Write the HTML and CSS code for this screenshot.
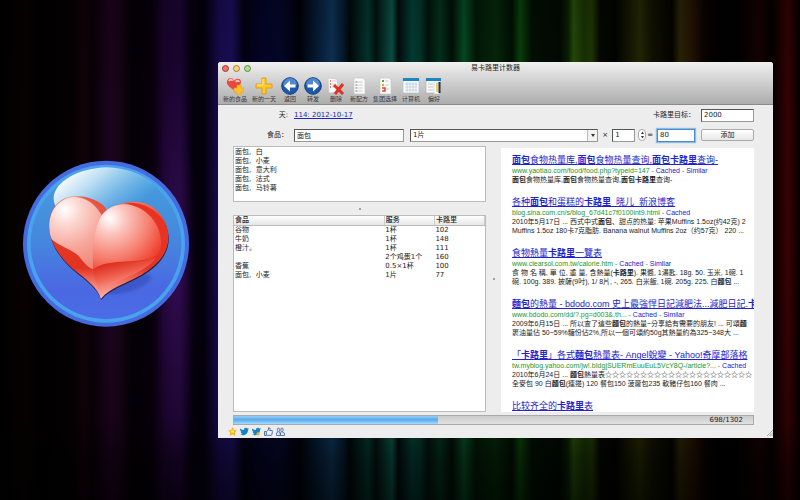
FILE: index.html
```html
<!DOCTYPE html>
<html lang="zh-CN">
<head>
<meta charset="utf-8">
<title>易卡路里计数器</title>
<link rel="stylesheet" href="styles.css">
</head>
<body>
<svg class="logo" viewBox="36 30 504 504" aria-hidden="true">
  <defs>
    <linearGradient id="disc" x1="0" y1="0" x2="0" y2="1"><stop offset="0" stop-color="#43a0dc"/><stop offset=".5" stop-color="#4685de"/><stop offset=".8" stop-color="#4a68e2"/><stop offset="1" stop-color="#4a6ce6"/></linearGradient>
    <linearGradient id="gloss" x1=".05" y1=".2" x2=".75" y2=".65"><stop offset="0" stop-color="#fff"/><stop offset=".35" stop-color="#b8dcf2"/><stop offset="1" stop-color="#8cc8ee" stop-opacity="0"/></linearGradient>
    <radialGradient id="left" gradientUnits="userSpaceOnUse" cx="165" cy="180" r="190"><stop offset="0" stop-color="#fff"/><stop offset=".25" stop-color="#fbd5cf"/><stop offset=".6" stop-color="#f7a79c"/><stop offset="1" stop-color="#f08374"/></radialGradient>
    <radialGradient id="right" gradientUnits="userSpaceOnUse" cx="300" cy="205" r="185"><stop offset="0" stop-color="#fff"/><stop offset=".25" stop-color="#fbc6bf"/><stop offset=".65" stop-color="#f67d6d"/><stop offset="1" stop-color="#ee3424"/></radialGradient>
    <linearGradient id="base" x1="0" y1="0" x2="0" y2="1"><stop offset="0" stop-color="#f0826f"/><stop offset=".3" stop-color="#e83a28"/><stop offset=".7" stop-color="#e23222"/><stop offset=".85" stop-color="#f47a6a"/><stop offset="1" stop-color="#fcb8ae"/></linearGradient>
    <linearGradient id="facet" gradientUnits="userSpaceOnUse" x1="250" y1="340" x2="275" y2="440"><stop offset="0" stop-color="#d51f12"/><stop offset=".5" stop-color="#f0604e"/><stop offset="1" stop-color="#fbb0a6"/></linearGradient>
    <filter id="soft" x="-20%" y="-20%" width="140%" height="140%"><feGaussianBlur stdDeviation="5"/></filter>
  </defs>
  <circle cx="288" cy="281" r="249" fill="#466ae0"/>
  <circle cx="288" cy="281" r="237" fill="#49a2ec"/>
  <circle cx="288" cy="281" r="226" fill="url(#disc)"/>
  <path d="M288 52C210 55 133 92 131 145C131 195 200 235 290 225C380 215 460 170 468 140C430 90 370 53 288 52Z" fill="url(#gloss)"/>
  <ellipse cx="355" cy="402" rx="72" ry="22" transform="rotate(-18 355 402)" fill="#304bb8" opacity=".6" filter="url(#soft)"/>
  <path d="M275 195C255 150 215 133 180 140C135 150 115 190 118 235C122 290 160 335 205 370C235 393 262 415 273 446C300 412 350 400 395 374C448 342 478 305 475 255C470 200 430 155 375 155C330 155 290 175 275 195Z" fill="#22204c" transform="translate(1 4)"/>
  <path d="M275 195C255 150 215 133 180 140C135 150 115 190 118 235C122 290 160 335 205 370C235 393 262 415 273 446C300 412 350 400 395 374C448 342 478 305 475 255C470 200 430 155 375 155C330 155 290 175 275 195Z" fill="url(#base)"/>
  <path d="M250 357C300 325 380 348 438 320C430 352 340 385 305 405C288 416 278 430 273 446C268 415 250 390 250 357Z" fill="url(#facet)"/>
  <path d="M275 195C258 167 235 145 195 140C145 142 115 185 118 235C119 250 121 260 125 268C150 290 190 300 208 320C225 342 238 356 250 357C252 300 250 235 275 195Z" fill="url(#left)"/>
  <path d="M200 138C245 140 282 160 290 180L275 195C262 165 235 145 200 138Z" fill="#e65443"/>
  <path d="M275 195C295 172 320 162 345 163C410 168 455 215 455 265C455 300 445 318 425 324C370 342 295 325 250 357C246 300 250 235 275 195Z" fill="url(#right)"/>
  <path d="M340 159C420 150 475 205 474 260C473 290 462 310 450 320C468 240 425 172 340 159Z" fill="#e93322"/>
</svg>

<main class="window">
  <header class="chrome">
    <div class="titlebar">
      <span class="lights"><i class="red"></i><i class="amber"></i><i class="green"></i></span>
      <h1>易卡路里计数器</h1>
    </div>
    <nav class="toolbar">
      <button type="button"><svg viewBox="0 0 18 18"><path d="M8 13C3 10 0 7 1 4C2 0 7 0 8 4C10 1 15 1 15 5C15 8 12 10 8 13Z" fill="#e8493a"/><path d="M3 4C4 2 6 2 6 4M10 5C11 3 13 4 13 5" stroke="#fbc7bf" stroke-width="2" fill="none"/><path d="M11 8h4v3h3v4h-3v3h-4v-3H8v-4h3z" fill="#fcc22c" stroke="#e89a1e" stroke-width=".6"/></svg><span>新的食品</span></button>
      <button type="button"><svg viewBox="0 0 18 18"><path d="M7 1h4v6h6v4h-6v6H7v-6H1V7h6z" fill="#fdc925" stroke="#e59d12"/><path d="M8 2v6H2" stroke="#fff09a" fill="none"/></svg><span>新的一天</span></button>
      <button type="button"><svg viewBox="0 0 18 18"><circle cx="9" cy="9" r="8.3" fill="#1c58ac" stroke="#123c80"/><path d="M2 8a7 7 0 0 1 14 0c-4 2-10 2-14 0" fill="#6da5e2" opacity=".65"/><path d="M3 9l6-5.500v4h5.500v3H9v4z" fill="#fff"/></svg><span>返回</span></button>
      <button type="button"><svg viewBox="0 0 18 18"><circle cx="9" cy="9" r="8.3" fill="#1c58ac" stroke="#123c80"/><path d="M2 8a7 7 0 0 1 14 0c-4 2-10 2-14 0" fill="#6da5e2" opacity=".65"/><path d="M15 9L9 3.500v4H3.500v3H9v4z" fill="#fff"/></svg><span>转发</span></button>
      <button type="button"><svg viewBox="0 0 18 18"><path d="M1 1l9 1 1 13-9 1z" fill="#fafafa" stroke="#c5c5c5" stroke-width=".6"/><path d="M3 4l1 0M3 7h1M3 10h1" stroke="#e05a4c" stroke-width="1.500"/><path d="M5 4h4M5 7h4M5 10h4" stroke="#bbb" stroke-width=".7"/><path d="M7 8l9 9M16 7l-8 10" stroke="#df3224" stroke-width="3"/></svg><span>删除</span></button>
      <button type="button"><svg viewBox="0 0 18 18"><path d="M4 1h9l2 2v14H4z" fill="#fafafa" stroke="#c5c5c5" stroke-width=".6"/><path d="M5.500 5h2M5.500 8h2M5.500 11h2M5.500 14h2" stroke="#777" stroke-width="1.200"/><path d="M8.500 5h4M8.500 8h4M8.500 11h4M8.500 14h4" stroke="#bbb" stroke-width=".8"/></svg><span>新配方</span></button>
      <button type="button"><svg viewBox="0 0 18 18"><path d="M4 1h9l2 2v14H4z" fill="#fafafa" stroke="#c5c5c5" stroke-width=".6"/><path d="M6 4l2 0" stroke="#58a842" stroke-width="2"/><path d="M6 8h2" stroke="#eda51c" stroke-width="2"/><path d="M6 11h3v3H6" stroke="#d9472c" stroke-width="1.500" fill="none"/><path d="M9.500 4h3M9.500 8h3M10 12h3" stroke="#bbb" stroke-width=".8"/></svg><span>集团选择</span></button>
      <button type="button"><svg viewBox="0 0 18 18"><path d="M1 2h16v14H1z" fill="#f8fafc" stroke="#aab9c5" stroke-width=".6"/><path d="M1 1h16v3H1z" fill="#1c86c0"/><path d="M3 7h12M3 10h12M3 13h12M5 5v10M8 5v10M11 5v10M14 5v10" stroke="#b9c9d6" stroke-width=".7"/></svg><span>计算机</span></button>
      <button type="button"><svg viewBox="0 0 18 18"><path d="M1 2h14v14H1z" fill="#fafafa" stroke="#aaa" stroke-width=".6"/><path d="M1 1h15v3H1z" fill="#1c86c0"/><path d="M3 7h5M3 10h5M3 13h5" stroke="#bbb" stroke-width=".8"/><path d="M9 5h5v12H9z" fill="#fff" stroke="#bbb" stroke-width=".5"/><path d="M14.500 5v11" stroke="#333" stroke-width="2"/><path d="M12 6v9" stroke="#e5bc36" stroke-width="1.500"/></svg><span>偏好</span></button>
    </nav>
  </header>

  <section class="body">
    <form class="form">
      <div class="row">
        <span class="caption">天:</span>
        <a class="day" href="#day">114: 2012-10-17</a>
        <label class="goal" for="goal">卡路里目标：</label>
        <input class="wide" id="goal" value="2000">
      </div>
      <div class="row">
        <label class="caption" for="food">食品：</label>
        <input class="food" id="food" value="面包">
        <span class="pick"><select aria-label="服务"><option>1片</option></select><svg viewBox="0 0 9 11"><path d="M3 4h4L5 7z" fill="#333"/></svg></span>
        <label class="sign" for="count">×</label>
        <input class="count" id="count" value="1">
        <span class="stepper">
          <button type="button" aria-label="增加"><svg viewBox="0 0 5 5"><path d="M1 4h3L2.500 1.500z" fill="#333"/></svg></button>
          <button type="button" aria-label="减少"><svg viewBox="0 0 5 5"><path d="M1 1h3L2.500 3.500z" fill="#333"/></svg></button>
        </span>
        <label class="sign" for="total">=</label>
        <input class="total" id="total" value="80">
        <button class="wide add" type="button">添加</button>
      </div>
    </form>

    <div class="panes">
      <div class="left">
        <ul class="matches">
          <li>面包,&nbsp; 白</li>
          <li>面包,&nbsp; 小麦</li>
          <li>面包,&nbsp; 意大利</li>
          <li>面包,&nbsp; 法式</li>
          <li>面包,&nbsp; 马铃薯</li>
        </ul>
        <div class="split"><i></i></div>
        <div class="log">
          <table>
            <thead><tr><th class="name">食品</th><th class="serving">服务</th><th>卡路里</th></tr></thead>
            <tbody>
              <tr><td>谷物</td><td>1杯</td><td>102</td></tr>
              <tr><td>牛奶</td><td>1杯</td><td>148</td></tr>
              <tr><td>橙汁。</td><td>1杯</td><td>111</td></tr>
              <tr><td></td><td>2个鸡蛋1个</td><td>160</td></tr>
              <tr><td>香蕉</td><td>0.5×1杯</td><td>100</td></tr>
              <tr><td>面包,&nbsp; 小麦</td><td>1片</td><td>77</td></tr>
            </tbody>
          </table>
        </div>
      </div>
      <div class="split vertical"><i></i></div>
      <div class="results">
        <article>
          <h2><a href="#r1"><b>面包</b>食物热量库,<b>面包</b>食物热量查询,<b>面包卡路里</b>查询-</a></h2>
          <p class="url">www.yaotiao.com/food/food.php?typeid=147 - <a href="#c1">Cached</a> - <a href="#s1">Similar</a></p>
          <p><b>面包</b>食物热量库,<b>面包</b>食物热量查询,<b>面包卡路里</b>查询-</p>
        </article>
        <article>
          <h2><a href="#r2">各种<b>面包</b>和蛋糕的<b>卡路里</b>_晓儿_新浪博客</a></h2>
          <p class="url">blog.sina.com.cn/s/blog_67d41c7f0100int9.html - <a href="#c2">Cached</a></p>
          <p>2010年5月17日 ... 西式中式<b>面包</b>、甜点的热量: 苹果Muffins 1.5oz(约42克) 2<br>Muffins 1.5oz 180卡7克脂肪. Banana walnut Muffins 2oz（约57克） 220 ...</p>
        </article>
        <article lang="zh-TW">
          <h2><a href="#r3">食物熱量<b>卡路里</b>一覽表</a></h2>
          <p class="url">www.clearsol.com.tw/calorie.htm - <a href="#c3">Cached</a> - <a href="#s3">Similar</a></p>
          <p>食 物 名 稱, 單 位, 重 量, 含熱量(<b>卡路里</b>). 果醬, 1湯匙. 18g. 50. 玉米, 1碗. 1<br>碗. 100g. 389. 披薩(9吋), 1/ 8片, -, 265. 白米飯, 1碗. 205g. 225. 白<b>麵包</b> ...</p>
        </article>
        <article lang="zh-TW">
          <h2><a href="#r4"><b>麵包</b>的熱量 - bdodo.com 史上最強悍日記減肥法...減肥日記.<b>卡路</b></a></h2>
          <p class="url">www.bdodo.com/dd/?.pg=d003&amp;.th... - <a href="#c4">Cached</a> - <a href="#s4">Similar</a></p>
          <p>2009年6月15日 ... 所以查了這些<b>麵包</b>的熱量~分享給有需要的朋友! ... 可頌<b>麵</b><br>裹油量佔 50~59%糖份佔2%,所以一個可頌約50g其熱量約為325~348大 ...</p>
        </article>
        <article lang="zh-TW">
          <h2><a href="#r5">「<b>卡路里</b>」各式<b>麵包</b>熱量表- Angel蛻變 - Yahoo!奇摩部落格</a></h2>
          <p class="url">tw.myblog.yahoo.com/jw!.bIdgjSUERmEuuEuL5VcY8Q-/article?... - <a href="#c5">Cached</a></p>
          <p>2010年6月24日 ... <b>麵包</b>熱量表☆☆☆☆☆☆☆☆☆☆☆☆☆☆☆☆☆☆☆☆☆<br>全麥包 90 白<b>麵包</b>(連邊) 120 餐包150 菠蘿包235 軟豬仔包160 餐肉 ...</p>
        </article>
        <article>
          <h2><a href="#r6">比较齐全的<b>卡路里</b>表</a></h2>
        </article>
      </div>
    </div>
    <div class="progress"><i></i><span>698/1302</span></div>
  </section>

  <footer class="share">
    <a href="#star" aria-label="收藏"><svg viewBox="0 0 9 9"><path d="M4.500 0L6 3l3 .4-2.200 2L7.400 9 4.500 7.400 1.600 9l.6-3.600L0 3.400 3 3z" fill="#f9b61e"/><path d="M3 3.500h3v2H3z" fill="#ffe58a"/></svg></a>
    <a href="#tweet" aria-label="发推"><svg viewBox="0 0 9 9"><path d="M0 1.500c1.500 1.500 3 1.500 3.800 1.500C4 .5 6.800.2 7.500 1.600L9 1.500 8 3c0 4.500-5 6.500-8 4.600 1 0 2-.2 2.300-.8C1 6.500.8 5.500.8 5.300L1.500 5C.2 4 0 3 0 1.500z" fill="#1684c2"/></svg></a>
    <a href="#follow" aria-label="关注"><svg viewBox="0 0 9 9"><path d="M0 1.500c1.500 1.500 3 1.500 3.800 1.500C4 .5 6.800.2 7.500 1.600L9 1.500 8 3c0 4.500-5 6.500-8 4.600 1 0 2-.2 2.300-.8C1 6.500.8 5.500.8 5.300L1.500 5C.2 4 0 3 0 1.500z" fill="#1684c2"/><path d="M5.500 5h1.200v1.200H8v1.200H6.700v1.300H5.500V7.400H4.300V6.200h1.200z" fill="#f9b61e"/></svg></a>
    <a href="#like" aria-label="赞"><svg viewBox="0 0 9 9"><path d="M.5 4.500h1.800v4H.5zM2.500 4.500C4 4 4.500 2.500 4.600.700 6.500.5 6 2.500 5.800 3.500h2.400c.5 1-.2 4-.8 4.800H3.500l-1-.5" fill="#eef2f9" stroke="#415f9e" stroke-width=".9"/></svg></a>
    <a href="#friends" aria-label="朋友"><svg viewBox="0 0 9 9"><path d="M2.500 1c1.500 0 1.500 3 .3 4l1.500 1v2.500H.4V6L2 5C1 3 1.200 1 2.500 1zM6 1c1.500 0 1.500 3 .3 4l2.300 1.200v2.300H4.400V6l1-1C4.500 3 4.700 1 6 1z" fill="#dde4f0" stroke="#415f9e" stroke-width=".8"/></svg></a>
    <svg class="grip" viewBox="0 0 6 6"><path d="M0 6L6 0M2.500 6L6 2.500M4.500 6L6 4.500" stroke="#888" stroke-width=".7"/></svg>
  </footer>
</main>
</body>
</html>
```
FILE: styles.css
```css
* { box-sizing: border-box; }

body {
  display: flex;
  gap: 28px;
  height: 100vh;
  margin: 0;
  padding: 62px 27px 62px 22px;
  overflow: hidden;
  color: #222;
  font: 7px/9px "DejaVu Sans", "Noto Sans CJK SC", sans-serif;
  background:
    linear-gradient(180deg, rgba(0,0,0,.25) 0, rgba(0,0,0,.1) 20%, rgba(0,0,0,0) 50%, rgba(0,0,0,.2) 84%, rgba(0,0,0,.5) 92%, rgba(0,0,0,.65) 100%),
    radial-gradient(20px 220px at 22% 55%, rgba(72,20,110,.5), transparent),
    linear-gradient(90deg,
      #000 0, #080202 3%, #010000 5%, #050103 9%, #120209 10.500%, #080106 11.500%,
      #1e0421 13.800%, #180417 15%, #030005 16.500%, #08000c 19%, #1c0430 20.500%, #1e0538 22.500%,
      #06000f 24%, #03000c 25.500%, #1c0c58 27.500%, #1c1060 29%, #030114 30.500%,
      #04042c 33%, #04082c 35%, #01010a 37.500%, #04162e 39%, #103860 41.500%, #041c30 43%,
      #010808 43.700%, #043c34 46%, #021410 47%, #0c5c50 49%, #020c0c 49.800%,
      #04443c 51.500%, #043c30 52.500%, #01140f 53.500%, #04381f 55%, #011008 56.500%, #085428 58%,
      #021a08 59.500%, #062c0c 62%, #021003 64%, #0a4a0a 65%, #031004 66.500%, #010a02 70%,
      #0a2404 71%, #2c5408 71.700%, #1a3804 73%, #243c04 74%, #050802 75%, #020400 77%,
      #282c04 80%, #121403 81.500%, #040300 84%, #2e2806 85%, #281404 86.500%, #0c0301 88%,
      #020000 89.500%, #010000 92%, #180202 95%, #040000 96.500%, #3a0204 98.500%, #280204 99%, #060000 100%);
}

h1, h2, p, ul { margin: 0; padding: 0; }
a { color: #2226b8; }
svg { display: block; }
button, input, select { margin: 0; color: inherit; font: inherit; }

.logo { flex: none; align-self: center; width: 168px; margin-bottom: 12px; }

.window {
  display: flex;
  flex: 1;
  flex-direction: column;
  min-width: 0;
  overflow: hidden;
  background: #ededed;
  border-radius: 3px 3px 0 0;
}

/* Title bar and toolbar */
.chrome {
  padding-bottom: 2px;
  background: linear-gradient(#f0f0f0, #d8d8d8 35%, #adadad);
  border-bottom: 1px solid #8a8a8a;
}
.titlebar { display: grid; grid-template-columns: 1fr auto 1fr; align-items: center; height: 12px; padding: 0 4px; }
.titlebar h1 { font: inherit; }
.lights { display: flex; gap: 4px; }
.lights i { width: 7px; height: 7px; border: 1px solid #777; border-radius: 50%; }
.lights .red { background: #f07468; border-color: #9e3832; }
.lights .amber { background: #fbd47c; border-color: #a87832; }
.lights .green { background: #aede90; border-color: #5c8848; }
.toolbar { display: flex; gap: 5px; padding: 3px 5px 0; }
.toolbar button {
  display: flex;
  flex-direction: column;
  align-items: center;
  min-width: 18px;
  padding: 0;
  background: none;
  border: 0;
  color: #3a3a3a;
  font-size: 6px;
  line-height: 7px;
  white-space: nowrap;
}
.toolbar svg { width: 18px; height: 18px; }

/* Entry form */
.body { display: flex; flex: 1; flex-direction: column; min-height: 0; padding: 4px 19px 0 15px; }
.form { display: grid; gap: 8px; padding-bottom: 5px; }
.row { display: flex; align-items: center; gap: 6px; height: 12px; }
.caption { width: 55px; text-align: right; }
.day { flex: 1; }
input, select {
  min-width: 0;
  height: 13px;
  padding: 0 2px;
  background: #fff;
  border: 1px solid #999;
  border-top-color: #555;
  border-left-color: #555;
  border-radius: 0;
}
.wide { width: 53px; }
.food { width: 110px; }
.pick { position: relative; display: flex; flex: 1; }
.pick select { width: 100%; appearance: none; }
.pick svg {
  position: absolute;
  inset: 1px 1px 1px auto;
  width: 10px;
  height: 11px;
  background: #f2f2f2;
  border-left: 1px solid #bbb;
  pointer-events: none;
}
.sign { margin: 0 -2px; }
.count { width: 23px; }
.stepper { display: flex; flex-direction: column; width: 8px; margin: 0 -3px; background: #fff; border: 1px solid #aaa; border-radius: 4px; }
.stepper button { display: grid; place-items: center; height: 5px; padding: 0; background: none; border: 0; }
.stepper svg { width: 5px; height: 5px; }
.total { width: 38px; border: 1px solid #4c8cc8; box-shadow: 0 0 1px 1px #8dbbe6; }
.add { height: 12px; padding: 0; background: linear-gradient(#fff, #e8e8e8); border: 1px solid #aaa; border-radius: 2px; line-height: 9px; }

/* Panes */
.panes { display: grid; flex: 1; grid-template-columns: minmax(0, 1fr) 15px minmax(0, 1fr); grid-template-rows: minmax(0, 1fr); min-height: 0; }
.left { display: flex; flex-direction: column; }
.matches { height: 56px; padding: 1px 1px 0; background: #fff; border: 1px solid #bbb; list-style: none; }
.split { display: grid; place-items: center; height: 13px; }
.split i { width: 2px; height: 2px; background: #888; border-radius: 50%; }
.split.vertical { height: auto; }
.log { flex: 1; background: #fff; border: 1px solid #bbb; }
table { width: 100%; border-collapse: collapse; table-layout: fixed; }
th, td { height: 9px; padding: 0 1px; text-align: left; white-space: nowrap; }
th { background: linear-gradient(#fff, #e6e6e6); border-right: 1px solid #ccc; border-bottom: 1px solid #bbb; font-weight: 500; }
.name { width: 60%; }
.serving { width: 20%; }

.results {
  margin-top: 2px;
  padding: 7px 0 0 11px;
  overflow: hidden;
  background: #fff;
  font-family: "Liberation Sans", "Noto Sans CJK SC", sans-serif;
  white-space: nowrap;
}
.results article { margin-bottom: 13px; }
.results h2 { font-size: 9px; font-weight: 400; line-height: 11px; }
.results a { color: #2222cc; }
.results .url { color: #1b962c; }
.results .url a { text-decoration: none; }

/* Progress and footer */
.progress { display: flex; align-items: center; justify-content: space-between; height: 10px; margin-top: 3px; padding-right: 10px; background: linear-gradient(#ccc, #e2e2e2); border: 1px solid #aaa; }
.progress i { width: 40%; height: 8px; background: linear-gradient(#98ccf4, #5cacec 45%, #66b4f0 55%, #a2daff); }
.share { display: flex; gap: 3px; align-items: center; height: 13px; padding: 1px 0 2px 10px; }
.share svg { width: 9px; height: 9px; }
.share .grip { align-self: flex-end; width: 6px; height: 6px; margin-left: auto; }
```
